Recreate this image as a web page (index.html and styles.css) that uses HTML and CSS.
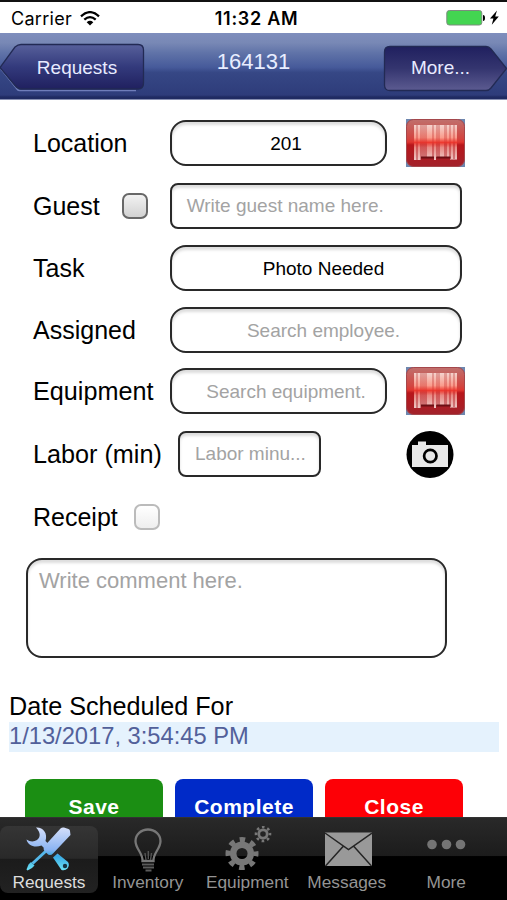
FILE: index.html
```
<!DOCTYPE html>
<html lang="en">
<head>
  <meta charset="utf-8">
  <title>Request 164131</title>
  <link rel="stylesheet" href="styles.css">
</head>
<body>
  <!-- shared icon -->
  <svg width="0" height="0" class="defs">
    <defs>
      <linearGradient id="red" x1="0" y1="0" x2="0" y2="1">
        <stop offset="0" stop-color="#c0706d"/>
        <stop offset=".4" stop-color="#d34540"/>
        <stop offset=".48" stop-color="#e03630"/>
        <stop offset=".54" stop-color="#b8161b"/>
        <stop offset="1" stop-color="#a2222b"/>
      </linearGradient>
      <linearGradient id="bars" gradientUnits="userSpaceOnUse" x1="0" y1="6" x2="0" y2="41">
        <stop offset="0" stop-color="#f4d3ce"/>
        <stop offset=".36" stop-color="#fa9c8c"/>
        <stop offset=".5" stop-color="#ee3a30"/>
        <stop offset=".64" stop-color="#e88a84"/>
        <stop offset="1" stop-color="#eec8c6"/>
      </linearGradient>
      <symbol id="barcode" viewBox="0 0 59 48">
        <rect width="59" height="48" fill="#6e86ae"/>
        <rect x=".5" y=".5" width="58" height="47" rx="7" fill="url(#red)" stroke="#a5474b"/>
        <path d="M8 6h43v35h-7v-3H15v3H8z" fill="url(#bars)" opacity=".55"/>
        <g fill="url(#bars)">
          <rect x="8" y="6" width="2" height="35"/>
          <rect x="12" y="6" width="2" height="35"/>
          <rect x="21" y="6" width="5" height="32"/>
          <rect x="28" y="6" width="2" height="35"/>
          <rect x="34" y="6" width="4" height="32"/>
          <rect x="41" y="6" width="2" height="32"/>
          <rect x="45" y="6" width="2" height="34"/>
          <rect x="49" y="6" width="2" height="34"/>
        </g>
        <path d="M15 38.500h13M30.500 38.500h14" stroke="#6d0f14" stroke-width="2"/>
      </symbol>
    </defs>
  </svg>

  <div class="phone">
    <div class="status">
      <div class="carrier">
        <span>Carrier</span>
        <svg width="20" height="15" viewBox="0 0 20 15">
          <g fill="none" stroke="#000" stroke-width="2.3">
            <path d="M1 5.300Q10-3 19 5.300"/>
            <path d="M4.300 8.700Q10 3.500 15.700 8.700"/>
          </g>
          <path d="M6.700 11.200Q10 8.400 13.300 11.200L10 14.600z"/>
        </svg>
      </div>
      <div class="clock">11:32 AM</div>
      <div class="power">
        <svg width="54" height="18" viewBox="0 0 54 18">
          <rect x=".8" y="1.500" width="35" height="14.500" rx="2.500" fill="#43d551" stroke="#7d8b7f"/>
          <path d="M37 6q2 0 2 3t-2 3z"/>
          <path d="M51 1.500l-7 8h3.400l-1.600 6.300 7-8.300h-3.600z"/>
        </svg>
      </div>
    </div>

    <div class="header">
      <button class="nav nav-back">
        <svg class="nav-shape" width="145" height="50" viewBox="0 0 145 50">
          <defs>
            <linearGradient id="back" x1="0" y1="0" x2="0" y2="1">
              <stop offset="0" stop-color="#57609b"/>
              <stop offset=".5" stop-color="#333a7c"/>
              <stop offset="1" stop-color="#20205f"/>
            </linearGradient>
          </defs>
          <path d="M1 26 17 46Q18 47.500 20 47.500H136" fill="none" stroke="#6f7dba" stroke-width="1.500"/>
          <path d="M0 24.500 15 4Q18 1.500 21 1.500H138Q143.500 1.500 143.500 7V40Q143.500 46 138 46H21Q18 46 15 42.500z" fill="url(#back)" stroke="#222a54" stroke-width="1.300"/>
        </svg>
        <span>Requests</span>
      </button>
      <h1>164131</h1>
      <button class="nav nav-more">
        <svg class="nav-shape" width="124" height="50" viewBox="0 0 124 50">
          <defs>
            <linearGradient id="more" x1="0" y1="0" x2="0" y2="1">
              <stop offset="0" stop-color="#20205f"/>
              <stop offset=".5" stop-color="#34356f"/>
              <stop offset="1" stop-color="#5c5b91"/>
            </linearGradient>
          </defs>
          <path d="M7 3.500H103Q106 3.500 108 6L123.500 25.500 108 45Q106 47.500 103 47.500H7Q1.500 47.500 1.500 42V9Q1.500 3.500 7 3.500z" fill="url(#more)" stroke="#222a54" stroke-width="1.300"/>
        </svg>
        <span>More...</span>
      </button>
    </div>

    <div class="content">
      <div class="row">
        <label class="w-label">Location</label>
        <div class="field round center w-short dark">201</div>
        <svg class="scan" width="59" height="48"><use href="#barcode"/></svg>
      </div>
      <div class="row row-guest">
        <label>Guest</label>
        <span class="check check-guest"></span>
        <div class="field w-long">Write guest name here.</div>
      </div>
      <div class="row">
        <label class="w-label">Task</label>
        <div class="field round center w-long dark">Photo Needed</div>
      </div>
      <div class="row row-assigned">
        <label class="w-label">Assigned</label>
        <div class="field round center w-long">Search employee.</div>
      </div>
      <div class="row">
        <label class="w-label wide">Equipment</label>
        <div class="field round center w-short">Search equipment.</div>
        <svg class="scan" width="59" height="48"><use href="#barcode"/></svg>
      </div>
      <div class="row row-labor">
        <label class="w-labor wide">Labor (min)</label>
        <div class="field w-min">Labor minu...</div>
        <svg class="camera" width="48" height="48" viewBox="0 0 48 48">
          <circle cx="24" cy="24.500" r="23.500"/>
          <path d="M6 15h6v-3.500h8V15h22v22H6z" fill="#e8e8e8"/>
          <circle cx="24.300" cy="26" r="6.200" fill="#e8e8e8" stroke="#000" stroke-width="2.700"/>
        </svg>
      </div>
      <div class="row row-receipt">
        <label>Receipt</label>
        <span class="check check-light"></span>
      </div>

      <div class="comment">Write comment here.</div>

      <div class="schedule">
        <div class="schedule-title">Date Scheduled For</div>
        <div class="schedule-value">1/13/2017, 3:54:45 PM</div>
      </div>

      <div class="actions">
        <button class="btn save">Save</button>
        <button class="btn complete">Complete</button>
        <button class="btn close">Close</button>
      </div>
    </div>

    <div class="tabs">
      <div class="tab active">
        <svg width="50" height="46" viewBox="0 0 50 46">
          <defs>
            <linearGradient id="tool" gradientUnits="userSpaceOnUse" x1="0" y1="2" x2="0" y2="45">
              <stop offset="0" stop-color="#d3defa"/>
              <stop offset=".5" stop-color="#8bb4f2"/>
              <stop offset=".65" stop-color="#38a9e4"/>
              <stop offset="1" stop-color="#6fe4f5"/>
            </linearGradient>
          </defs>
          <path d="M12 1.500C19 1 24 7 21.500 15L26 19.500 21.500 23.500 17.500 19.500C11 22 4 20 2.500 13.500 6 16 10 16 13 14 17 11 16.500 6 12 1.500z" fill="url(#tool)"/>
          <path d="M29 31.500 33.500 27.500 44 36A5.500 5.500 0 0 1 37.500 44z" fill="url(#tool)"/>
          <circle cx="41" cy="40" r="2.200" fill="#173443"/>
          <path d="M22 25 8.500 37.500" stroke="#55b8ea" stroke-width="3"/>
          <path d="M7 36 10.500 39.500 8 42 3.500 44.500 2.500 43.500 4.500 38.500z" fill="url(#tool)"/>
          <path d="M36.500 2.500Q38 1 40 1.500L44.500 3Q46 3.500 46 5L46.500 9 29 27.500Q26 30.500 23 27.500L20.500 25Q18.500 22.500 21 19.500z" fill="url(#tool)"/>
        </svg>
        <span>Requests</span>
      </div>
      <div class="tab">
        <svg width="50" height="46" viewBox="0 0 50 46">
          <g fill="none" stroke="#777" stroke-width="2.300">
            <path d="M19.500 35C20 27 12.500 23 12.500 15a12.500 11.500 0 0 1 25 0C37.500 23 30 27 30.500 35z"/>
            <path d="M23 34l-1-7M27.500 34l1-7M25.300 33v-8" stroke-width="1.400" stroke="#555"/>
            <path d="M19 38.500h12M20 41.500h11M22.500 44.500h6" stroke-width="2" stroke="#5b5b5b"/>
          </g>
        </svg>
        <span>Inventory</span>
      </div>
      <div class="tab">
        <svg width="50" height="46" viewBox="0 0 50 46">
          <g fill="none" stroke="#777">
            <circle cx="20" cy="27.500" r="8.800" stroke-width="6.500"/>
            <circle cx="20" cy="27.500" r="14" stroke-width="5" stroke-dasharray="5.500 5.496" stroke-dashoffset="2.750"/>
            <circle cx="41" cy="8" r="4.200" stroke-width="2.800"/>
            <circle cx="41" cy="8" r="7" stroke-width="2.600" stroke-dasharray="2.600 2.898" stroke-dashoffset="1.300"/>
          </g>
        </svg>
        <span>Equipment</span>
      </div>
      <div class="tab">
        <svg width="50" height="46" viewBox="0 0 50 46">
          <rect x="3" y="6.500" width="47" height="33.500" fill="#999"/>
          <path d="M3 7 26.500 23.500 50 7M3.500 40 21.500 20M49.500 40 31.500 20" fill="none" stroke="#252525" stroke-width="1.500"/>
        </svg>
        <span>Messages</span>
      </div>
      <div class="tab">
        <svg width="50" height="46" viewBox="0 0 50 46">
          <g fill="#747474">
            <circle cx="11" cy="18.500" r="4.800"/>
            <circle cx="25.500" cy="18.500" r="4.800"/>
            <circle cx="39.500" cy="18.500" r="4.800"/>
          </g>
        </svg>
        <span>More</span>
      </div>
    </div>
  </div>
</body>
</html>
```
FILE: styles.css
```
* {
  box-sizing: border-box;
}
body {
  margin: 0;
  font-family: "Liberation Sans", Arial, sans-serif;
  background: #fff;
}
.defs {
  display: block;
}
.phone {
  display: flex;
  flex-direction: column;
  width: 507px;
  height: 900px;
  overflow: hidden;
}

/* status bar */
.status {
  display: grid;
  grid-template-columns: 1fr auto 1fr;
  align-items: center;
  height: 33px;
  padding: 1px 7px 0 11px;
  border-top: 2px solid #111;
  font-family: Inter, sans-serif;
  font-size: 18px;
}
.carrier {
  display: flex;
  align-items: center;
  gap: 8px;
  letter-spacing: 0.3px;
}
.clock {
  padding-left: 2px;
  font-weight: 600;
  letter-spacing: 0.7px;
}
.power {
  display: flex;
  justify-content: flex-end;
}

/* header */
.header {
  display: flex;
  justify-content: space-between;
  height: 67px;
  padding-top: 10px;
  background: linear-gradient(#7f8ebd, #7888b5 15%, #6073a8 30%, #465a9a 52%, #364785 60%, #2e3c7a 94%, #202b62 97%);
  border-bottom: 1px solid #8890b2;
}
.header h1 {
  margin: 5px 21px 0 0;
  color: #e8edff;
  font-size: 22px;
  font-weight: normal;
  line-height: 28px;
}
.nav {
  display: grid;
  height: 50px;
  padding: 0;
  border: none;
  background: none;
  color: #e8ebff;
  font: 19px "Liberation Sans", Arial, sans-serif;
}
.nav > * {
  grid-area: 1 / 1;
  align-self: center;
}
.nav span {
  z-index: 1;
}
.nav-back span {
  padding-left: 9px;
}
.nav-more span {
  padding-right: 9px;
}

/* form */
.content {
  flex: 1;
  min-height: 0;
  overflow: hidden;
  padding-top: 20px;
}
.row {
  display: flex;
  align-items: center;
  height: 46px;
  margin-bottom: 16px;
  padding-left: 33px;
}
.row label {
  font-size: 25px;
  white-space: nowrap;
}
.row .wide {
  font-size: 25.2px;
}
.row .w-label {
  width: 137px;
}
.row .w-labor {
  width: 145px;
}
.row-guest {
  margin-top: 17px;
}
.row-assigned {
  margin-bottom: 15px;
}
.field {
  height: 46px;
  padding: 0 15px;
  border: 2px solid #292929;
  border-radius: 8px;
  box-shadow: inset 0 3px 3px #ddd;
  color: #a3a3a3;
  font-size: 19px;
  line-height: 41px;
  white-space: nowrap;
}
.round {
  border-radius: 16px;
}
.center {
  padding: 0 0 0 15px;
  text-align: center;
  line-height: 43px;
}
.dark {
  color: #000;
}
.w-short {
  width: 217px;
}
.w-long {
  width: 292px;
}
.w-min {
  width: 143px;
}
.scan {
  margin-left: 19px;
}
.camera {
  margin-left: 85px;
}
.check {
  width: 26px;
  height: 26px;
  border: 2px solid #686868;
  border-radius: 7px;
  background: linear-gradient(#f2f2f2, #d2d2d2);
}
.check-guest {
  margin: 0 22px 0 22px;
}
.check-light {
  margin-left: 16px;
  border-color: #bbb;
  background: linear-gradient(#fff, #eee);
}
.row-labor {
  margin-top: 17px;
}
.row-receipt {
  margin-top: 17px;
}
.comment {
  width: 421px;
  height: 100px;
  margin: 18px 0 0 26px;
  padding: 8px 11px;
  border: 2px solid #292929;
  border-radius: 16px;
  box-shadow: inset 0 3px 3px #ddd;
  color: #a3a3a3;
  font-size: 22px;
  line-height: 25px;
}
.schedule {
  margin: 32px 8px 0 9px;
}
.schedule-title {
  height: 32px;
  font-size: 25.2px;
  line-height: 32px;
}
.schedule-value {
  height: 30px;
  background: #e5f2fd;
  color: #52609a;
  font-size: 23.7px;
  line-height: 29px;
}
.actions {
  display: flex;
  gap: 12px;
  margin: 27px 0 0 25px;
}
.btn {
  width: 138px;
  height: 56px;
  padding: 0;
  border: none;
  border-radius: 8px;
  color: #fff;
  font: bold 21px "Liberation Sans", Arial, sans-serif;
  letter-spacing: 0.5px;
}
.save {
  background: #1b8e13;
}
.complete {
  background: #002ac8;
}
.close {
  background: #fd0006;
}

/* bottom tabs */
.tabs {
  display: flex;
  height: 83px;
  padding: 8px 10px 7px 0;
  border-top: 1px solid #333;
  background: linear-gradient(#292929, #1c1c1c 46%, #000 47%);
}
.tab {
  display: flex;
  flex-direction: column;
  align-items: center;
  width: 99.500px;
  color: #949494;
  font-size: 17.300px;
  line-height: 20px;
}
.active {
  width: 98px;
  border-radius: 8px;
  background: linear-gradient(#353535, #292929 48%, #1b1b1b 50%, #222);
  color: #ddd;
}
```
